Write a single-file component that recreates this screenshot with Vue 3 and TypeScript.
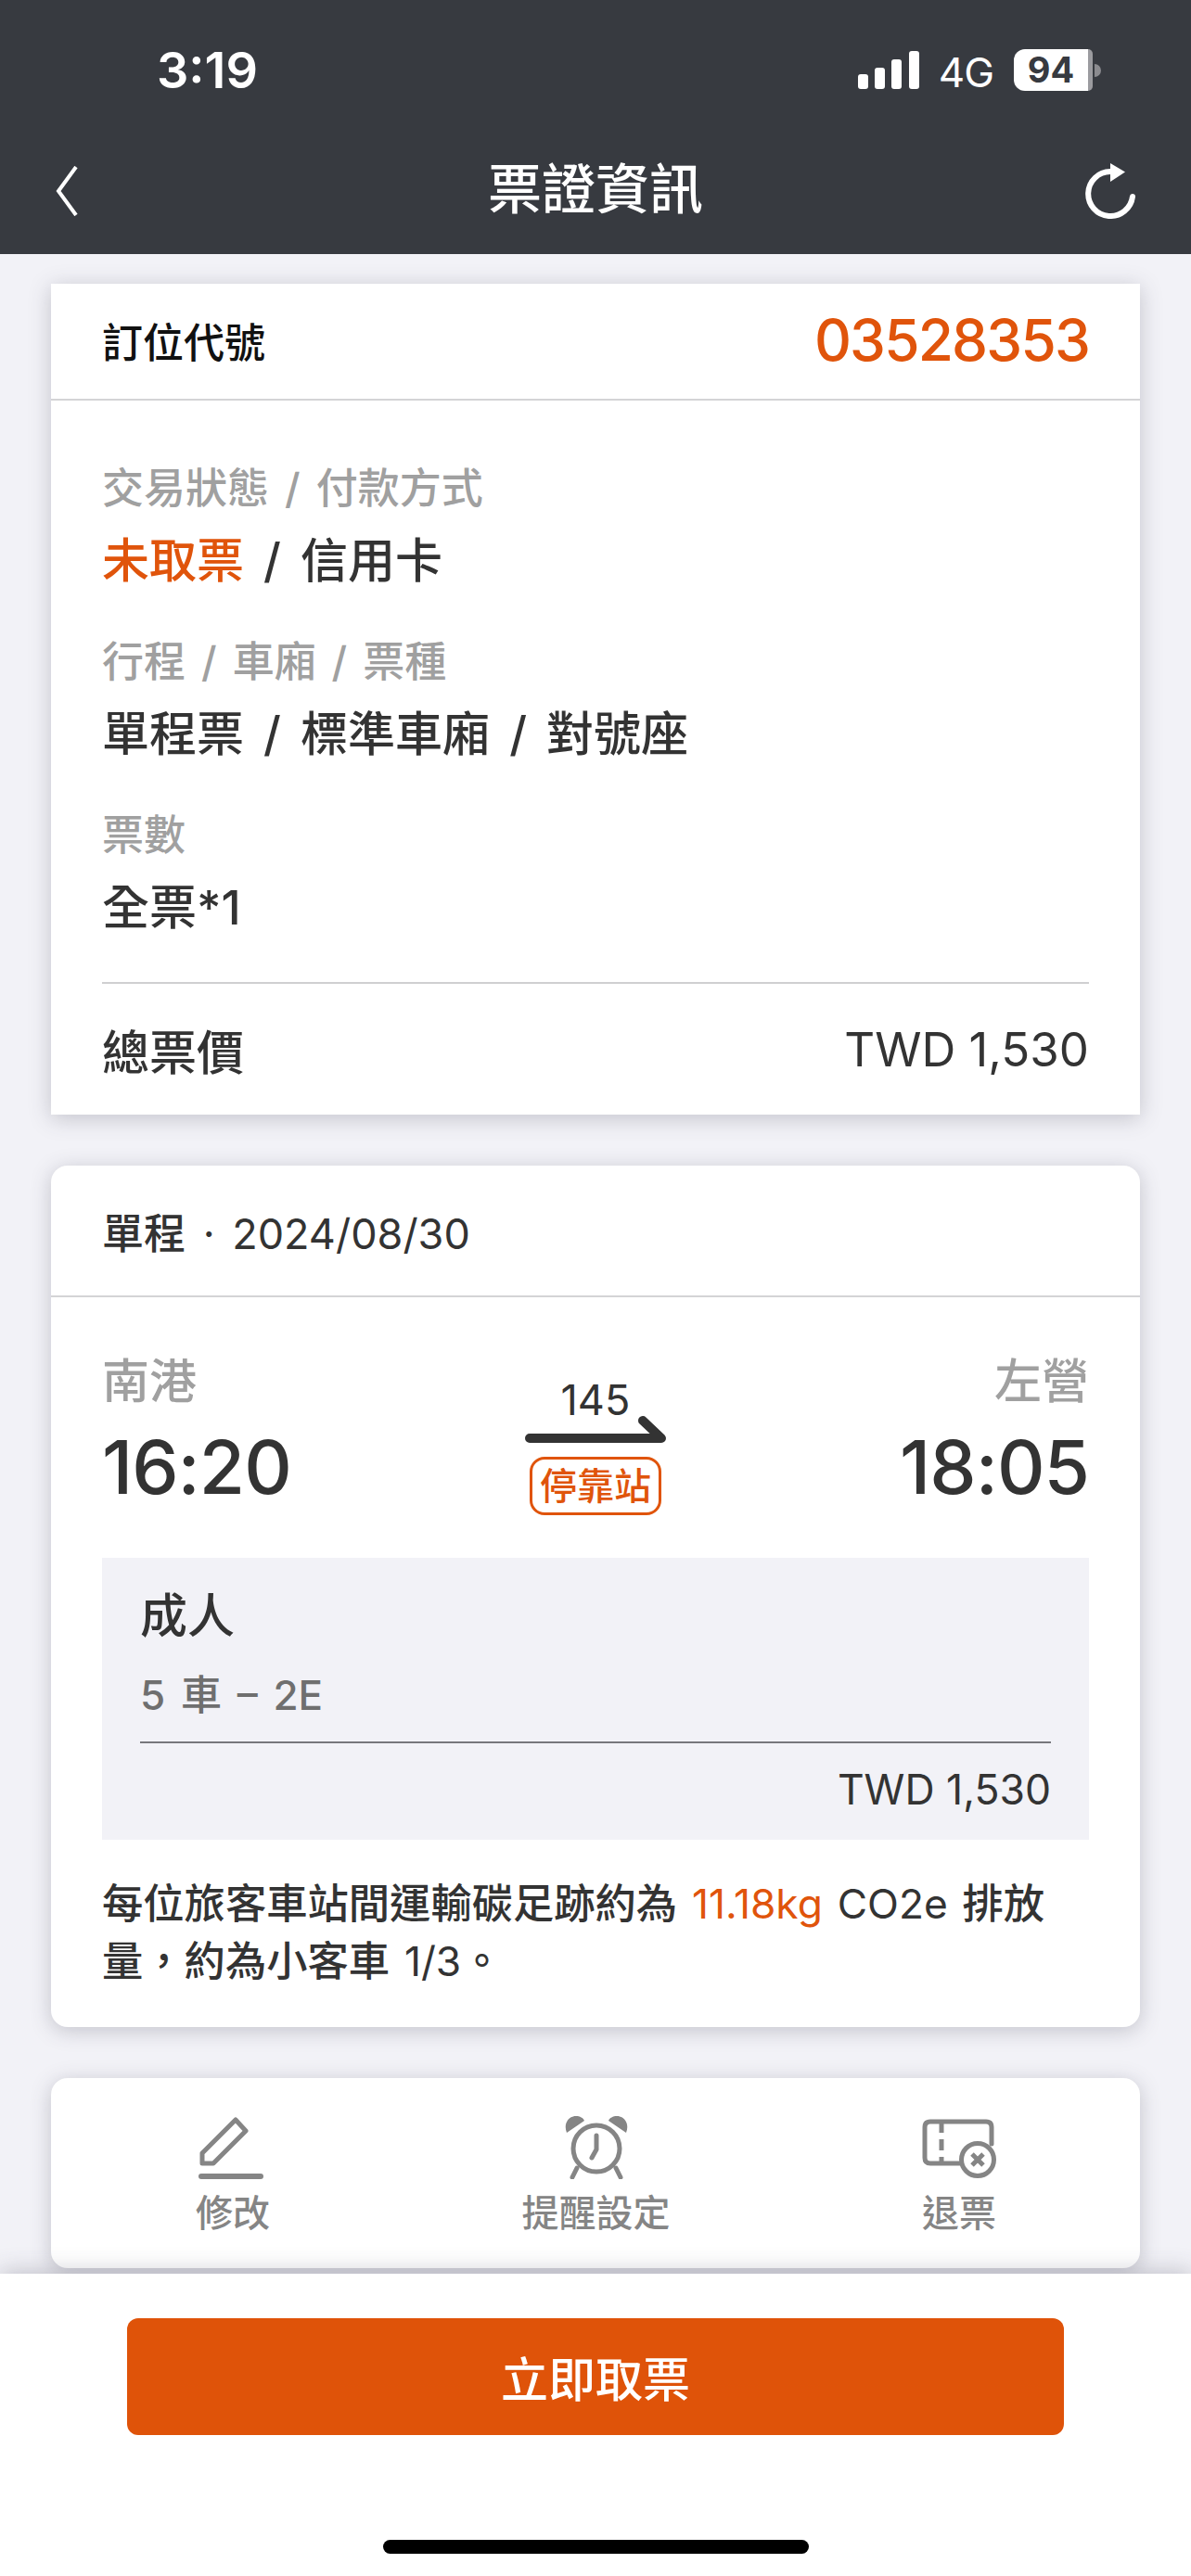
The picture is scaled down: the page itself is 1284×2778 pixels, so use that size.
<script setup lang="ts">
const rows: { label: string; value: string; accent?: string }[] = [
  { label: '交易狀態 / 付款方式', accent: '未取票', value: ' / 信用卡' },
  { label: '行程 / 車廂 / 票種', value: '單程票 / 標準車廂 / 對號座' },
  { label: '票數', value: '全票*1' },
]
</script>

<template>
  <div class="page">
    <header class="top">
      <div class="status">
        <span class="time">3:19</span>
        <div class="status-right">
          <svg class="signal" width="66" height="41" viewBox="0 0 66 41">
            <rect x="0" y="25" width="11" height="16" rx="3" />
            <rect x="18" y="18" width="11" height="23" rx="3" />
            <rect x="36" y="9" width="11" height="32" rx="3" />
            <rect x="55" y="0" width="11" height="41" rx="3" />
          </svg>
          <span class="net">4G</span>
          <div class="battery"><span class="batt-fill">94</span><span class="batt-rest"></span><span class="batt-cap"></span></div>
        </div>
      </div>
      <nav class="nav">
        <svg class="back" width="24" height="54" viewBox="0 0 24 54"><path d="M22 1 L3 27 L22 53" fill="none" stroke="#fff" stroke-width="4" /></svg>
        <h1 class="title">票證資訊</h1>
        <svg class="reload" width="54" height="60" viewBox="0 0 54 60">
          <path d="M51 36 A24 24 0 1 1 27 9" fill="none" stroke="#fff" stroke-width="6" stroke-linecap="round" />
          <path d="M27 0 L43 9.5 L27 20 Z" fill="#fff" />
        </svg>
      </nav>
    </header>

    <main class="content">
      <section class="card card-first">
        <div class="card-head code-head">
          <span class="code-label">訂位代號</span>
          <span class="code">03528353</span>
        </div>
        <div class="info">
          <div v-for="r in rows" :key="r.label" class="info-row">
            <div class="label">{{ r.label }}</div>
            <div class="value"><span v-if="r.accent" class="accent">{{ r.accent }}</span>{{ r.value }}</div>
          </div>
          <div class="total">
            <span class="total-label">總票價</span>
            <span>TWD 1,530</span>
          </div>
        </div>
      </section>

      <section class="card">
        <div class="card-head trip-head"><span><span class="strong">單程</span> · 2024/08/30</span></div>
        <div class="trip">
          <div class="route">
            <div class="stop">
              <div class="station">南港</div>
              <div class="clock">16:20</div>
            </div>
            <div class="middle">
              <div class="train">145</div>
              <svg width="152" height="30" viewBox="0 0 152 30" class="arrow">
                <path d="M5 24 H147 L127 5" fill="none" stroke="#333" stroke-width="10" stroke-linecap="round" stroke-linejoin="round" />
              </svg>
              <div class="tag">停靠站</div>
            </div>
            <div class="stop stop-end">
              <div class="station">左營</div>
              <div class="clock">18:05</div>
            </div>
          </div>
          <div class="passenger">
            <div class="p-type">成人</div>
            <div class="p-seat">5 車 – 2E</div>
            <div class="p-price">TWD 1,530</div>
          </div>
          <p class="note">每位旅客車站間運輸碳足跡約為 <span class="accent latin">11.18kg</span> <span class="latin">CO2e</span> 排放量，約為小客車 <span class="latin">1/3</span>。</p>
        </div>
      </section>

      <section class="card actions">
        <div class="action">
          <svg class="pencil" width="70" height="68" viewBox="0 0 70 68" fill="none" stroke="#858585" stroke-width="5">
            <path d="M40 4 L51 16 L16 51 H4 V40 Z" stroke-linejoin="round" />
            <path d="M3 65 H67" stroke-width="6" stroke-linecap="round" />
          </svg>
          <span>修改</span>
        </div>
        <div class="action">
          <svg width="68" height="68" viewBox="0 0 68 68" fill="none" stroke="#858585" stroke-width="5">
            <circle cx="34" cy="35" r="25" />
            <path d="M34 21 V36 L29 45" stroke-linecap="round" stroke-linejoin="round" />
            <path d="M13 56 L8 66 M55 56 L60 66" stroke-linecap="round" />
            <path d="M2 18 C-2 8 4 0 12 0 C16 0 20 2 21 5 Z M66 18 C70 8 64 0 56 0 C52 0 48 2 47 5 Z" fill="#858585" stroke="none" />
          </svg>
          <span>提醒設定</span>
        </div>
        <div class="action">
          <svg width="80" height="68" viewBox="0 0 80 68" fill="none" stroke="#858585" stroke-width="5">
            <path d="M42 51 H9 Q3 51 3 45 V12 Q3 6 9 6 H69 Q75 6 75 12 V30" stroke-linecap="round" />
            <path d="M21 6 V18 M21 25 V37 M21 44 V51" />
            <circle cx="60" cy="47" r="17.5" />
            <path d="M54 41 L66 53 M66 41 L54 53" stroke-width="5" />
          </svg>
          <span>退票</span>
        </div>
      </section>
    </main>

    <footer class="footer">
      <button class="cta" type="button">立即取票</button>
      <div class="home"></div>
    </footer>
  </div>
</template>

<style>
html, body { margin: 0; background: #f2f2f7; }
</style>

<style scoped>
.page {
  width: 1284px;
  height: 2778px;
  display: flex;
  flex-direction: column;
  overflow: hidden;
  background: #f2f2f7;
  font-family: Inter, "Noto Sans CJK TC", "Noto Sans", sans-serif;
  color: #333;
}
.top { background: #373a40; height: 274px; flex: none; color: #fff; }
.status {
  height: 152px;
  box-sizing: border-box;
  padding: 46px 97px 0 169px;
  display: flex;
  justify-content: space-between;
}
.time { font-size: 54px; font-weight: 600; line-height: 60px; }
.status-right { display: flex; align-items: flex-start; padding-top: 7px; }
.signal { fill: #fff; margin-top: 2px; }
.net { font-size: 44px; line-height: 50px; margin-left: 21px; font-weight: 400; letter-spacing: -1px; }
.battery { display: flex; align-items: center; margin-left: 22px; height: 45px; }
.batt-fill {
  width: 80px;
  height: 45px;
  background: #fff;
  color: #373a40;
  border-radius: 12px 0 0 12px;
  font-size: 38px;
  font-weight: 700;
  line-height: 45px;
  text-align: center;
}
.batt-rest { width: 5px; height: 45px; background: #9b9b9f; border-radius: 0 6px 6px 0; }
.batt-cap { width: 7px; height: 14px; margin-left: 2px; background: #8b8b8f; border-radius: 0 7px 7px 0; }
.nav {
  height: 122px;
  padding: 0 60px;
  display: grid;
  grid-template-columns: 1fr auto 1fr;
  align-items: start;
}
.back { margin-top: 27px; }
.reload { margin-top: 24px; justify-self: end; }
.title { margin: 12px 0 0; font-size: 58px; line-height: 80px; font-weight: 500; color: #fff; }

.content {
  flex: 1;
  min-height: 0;
  overflow: hidden;
  padding: 32px 55px 0;
  display: flex;
  flex-direction: column;
  gap: 55px;
}
.card {
  flex: none;
  background: #fff;
  border-radius: 18px;
  box-shadow: 0 4px 22px rgba(60, 60, 80, 0.26);
}
.card-first { border-radius: 0; }
.card-head {
  border-bottom: 2px solid #d4d4d6;
  padding: 0 55px;
  display: flex;
  align-items: center;
  justify-content: space-between;
  box-sizing: border-box;
}
.code-head { height: 126px; padding-bottom: 3px; }
.code-label { font-size: 44px; font-weight: 500; color: #111; }
.code { font-size: 62px; color: #e0540b; letter-spacing: -1.8px; font-weight: 500; }
.info { padding: 60px 55px 0; }
.info-row { margin-bottom: 31px; }
.label { font-size: 45px; line-height: 70px; color: #a0a0a0; word-spacing: 5px; font-weight: 500; }
.value { font-size: 51px; line-height: 86px; color: #333; font-weight: 500; word-spacing: 7.5px; }
.accent { color: #e0540b; }
.total {
  border-top: 2px solid #cfcfd1;
  margin-top: 37px;
  height: 141px;
  display: flex;
  justify-content: space-between;
  align-items: center;
  font-size: 51px;
  font-weight: 400;
}
.total-label { font-weight: 500; }
.trip-head { height: 142px; font-size: 45px; word-spacing: 6px; }
.strong { font-weight: 500; }
.trip { padding: 55px 55px 40px; }
.route { display: flex; justify-content: space-between; align-items: flex-start; }
.stop { display: flex; flex-direction: column; }
.stop-end { align-items: flex-end; }
.station { font-size: 51px; line-height: 72px; color: #a0a0a0; font-weight: 500; }
.clock { font-size: 80px; line-height: 112px; font-weight: 500; color: #333; letter-spacing: -1px; }
.middle { display: flex; flex-direction: column; align-items: center; padding-top: 34px; }
.train { font-size: 45px; line-height: 44px; color: #333; }
.arrow { margin-top: -5px; }
.tag {
  margin-top: 14px;
  border: 3px solid #e0540b;
  border-radius: 16px;
  color: #e0540b;
  font-size: 40px;
  font-weight: 500;
  line-height: 57px;
  padding: 0 8px;
}
.passenger {
  margin-top: 42px;
  background: #f2f2f7;
  padding: 25px 41px 0;
  height: 304px;
  box-sizing: border-box;
}
.p-type { font-size: 51px; line-height: 76px; font-weight: 500; color: #333; }
.p-seat {
  font-size: 44px;
  line-height: 64px;
  color: #6f6f6f;
  font-weight: 500;
  margin-top: 15px;
  padding-bottom: 18px;
  border-bottom: 2px solid #77777c;
  word-spacing: 5px;
}
.p-price { font-size: 44.5px; line-height: 100px; text-align: right; color: #333; }
.note { margin: 38px 0 0; font-size: 44.3px; line-height: 62px; color: #333; word-spacing: 4px; font-weight: 500; }
.latin { font-weight: 400; }
.actions {
  display: flex;
  justify-content: space-between;
  padding: 41px 155px 0 156px;
  height: 205px;
  box-sizing: border-box;
}
.action { display: flex; flex-direction: column; align-items: center; gap: 12px; color: #858585; font-size: 40px; line-height: 50px; font-weight: 500; }
.pencil { margin-left: -4px; }
.footer {
  flex: none;
  height: 326px;
  box-sizing: border-box;
  background: #fff;
  padding-top: 48px;
  position: relative;
  z-index: 1;
  display: flex;
  flex-direction: column;
  align-items: center;
  box-shadow: 0 -2px 24px rgba(60, 60, 80, 0.28);
}
.cta {
  width: 1010px;
  height: 126px;
  border: 0;
  border-radius: 12px;
  background: #df5309;
  color: #fff;
  font-family: inherit;
  font-size: 51px;
  font-weight: 500;
}
.home { width: 459px; height: 15px; border-radius: 8px; background: #000; margin-top: 113px; }
</style>
